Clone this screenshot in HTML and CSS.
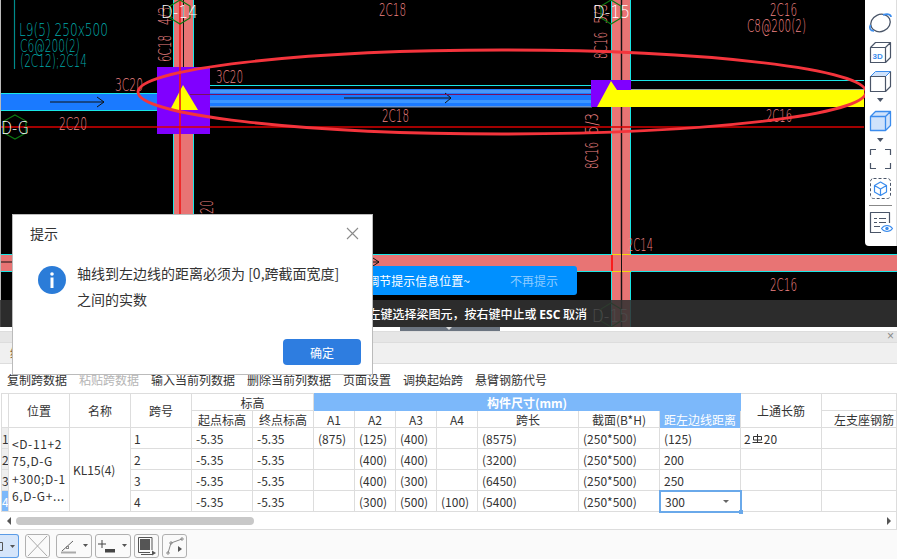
FILE: index.html
```html
<!DOCTYPE html>
<html lang="zh-CN">
<head>
<meta charset="utf-8">
<title>梁平法表格</title>
<link rel="stylesheet" href="styles.css">
</head>
<body>
<div class="app">
  <section class="canvas">
    <svg class="drawing" width="897" height="327" viewBox="0 0 897 327">
      <rect width="897" height="327" fill="#000"/>
      <rect width="1" height="327" fill="#bbb"/>
      <!-- columns -->
      <rect x="173" y="0" width="21" height="327" fill="#e87474"/>
      <path d="M173.500 0V327M193.500 0V327" class="cy"/>
      <rect x="611" y="0" width="20" height="327" fill="#e87474"/>
      <path d="M611.500 0V327M630.500 0V327" class="cy"/>
      <path d="M621.500 0V327" stroke="#111" stroke-width="1.400"/>
      <!-- lower beam -->
      <rect x="1" y="254" width="896" height="18" fill="#e87474"/>
      <path d="M1 254.500H897M1 271.500H897" class="cy"/>
      <path d="M612 254.500H631M612 271.500H631" stroke="#f5d90a"/>
      <path d="M612 255V271" stroke="#f00" stroke-width="1.500"/>
      <path d="M621.500 254V272" stroke="#111"/>
      <path d="M1 262H12M360 262H379M373 258L379 262L373 266" stroke="#111" fill="none"/>
      <!-- upper beams -->
      <rect x="1" y="93" width="156" height="18" fill="#1a7aff"/>
      <path d="M1 93.500H157M1 110.500H157" class="cy"/>
      <path d="M50 102H104M97 97L104 102L97 107" stroke="#111" fill="none"/>
      <path d="M210 85.500H592" class="cy"/>
      <rect x="210" y="89" width="382" height="18" fill="#1a7aff"/>
      <rect x="210" y="90" width="382" height="3" fill="#4a98f8"/>
      <rect x="210" y="100" width="382" height="3" fill="#3c96ff"/>
      <rect x="210" y="106" width="382" height="1.500" fill="#6a92c8"/>
      <path d="M344 98H451M445 93L451 98L445 103" stroke="#111" fill="none"/>
      <!-- nodes -->
      <rect x="157" y="67" width="53" height="67" fill="#8000ff"/>
      <path d="M190 94.500H592" stroke="#7a1060"/>
      <polygon points="183,85 170,110 198,110" fill="#ff0"/>
      <rect x="591" y="80" width="40" height="27" fill="#8000ff"/>
      <path d="M631 80.500H864" class="cy"/>
      <path d="M631 89.500H864" stroke="#9a9" />
      <polygon points="611,81 617,90 864,90 864,107 597,107" fill="#ff0"/>
      <path d="M180 0V214" stroke="#f01818" stroke-width="1.600"/>
      <path d="M183.500 0V67" stroke="#111"/>
      <path d="M1 127H864" stroke="#d80000" stroke-width="1.500"/>
      <!-- annotations -->
      <path d="M14.500 0V69" stroke="#008b8b" stroke-width="1.200"/>
      <text class="t teal" x="19" y="36" textLength="89" lengthAdjust="spacingAndGlyphs">L9(5) 250x500</text>
      <text class="t teal" x="20" y="52" textLength="60" lengthAdjust="spacingAndGlyphs">C6@200(2)</text>
      <text class="t teal" x="20" y="67" textLength="67" lengthAdjust="spacingAndGlyphs">(2C12);2C14</text>
      <text class="t" x="379" y="16" textLength="27" lengthAdjust="spacingAndGlyphs">2C18</text>
      <text class="t" x="115" y="91" textLength="28" lengthAdjust="spacingAndGlyphs">3C20</text>
      <text class="t" x="216" y="83" textLength="27" lengthAdjust="spacingAndGlyphs">3C20</text>
      <text class="t" x="382" y="122" textLength="27" lengthAdjust="spacingAndGlyphs">2C18</text>
      <text class="t" x="59" y="130" textLength="28" lengthAdjust="spacingAndGlyphs">2C20</text>
      <text class="t" x="770" y="16" textLength="27" lengthAdjust="spacingAndGlyphs">2C16</text>
      <text class="t" x="747" y="32" textLength="59" lengthAdjust="spacingAndGlyphs">C8@200(2)</text>
      <text class="t" x="766" y="122" textLength="26" lengthAdjust="spacingAndGlyphs">2C16</text>
      <text class="t" x="627" y="251" textLength="26" lengthAdjust="spacingAndGlyphs">2C14</text>
      <text class="t" x="770" y="291" textLength="27" lengthAdjust="spacingAndGlyphs">2C16</text>
      <text class="t" transform="translate(171 62) rotate(-90)" textLength="27" lengthAdjust="spacingAndGlyphs">6C18</text>
      <text class="t" transform="translate(171 25) rotate(-90) scale(.66 1)">4/3</text>
      <text class="t" transform="translate(213 214) rotate(-90)" textLength="14" lengthAdjust="spacingAndGlyphs">20</text>
      <text class="t" transform="translate(607 59) rotate(-90)" textLength="27" lengthAdjust="spacingAndGlyphs">8C16</text>
      <text class="t" transform="translate(607 24) rotate(-90) scale(.75 1)">5/3</text>
      <text class="t" transform="translate(598 134) rotate(-90)" textLength="21" lengthAdjust="spacingAndGlyphs">5/3</text>
      <text class="t" transform="translate(598 169) rotate(-90)" textLength="27" lengthAdjust="spacingAndGlyphs">8C16</text>
      <!-- ellipse -->
      <ellipse cx="502" cy="92" rx="364" ry="42" fill="none" stroke="#f4343c" stroke-width="2.800"/>
      <!-- axis marks -->
      <polygon points="180,0 190,6 190,18 180,24 170,18 170,6" class="hex"/>
      <polygon points="611,0 621,6 621,18 611,24 601,18 601,6" class="hex"/>
      <polygon points="15,115 26,121 26,133 15,139 4,133 4,121" class="hex"/>
      <polygon points="611,303 621,309 621,321 611,327 601,321 601,309" class="hex"/>
      <text class="t axis" x="161" y="18" textLength="37" lengthAdjust="spacingAndGlyphs">D-14</text>
      <text class="t axis" x="593" y="18" textLength="37" lengthAdjust="spacingAndGlyphs">D-15</text>
      <text class="t axis" x="1" y="134" textLength="28" lengthAdjust="spacingAndGlyphs">D-G</text>
      <text class="t axis" x="592" y="322" textLength="37" lengthAdjust="spacingAndGlyphs">D-15</text>
    </svg>

    <aside class="viewbar">
      <svg width="32" height="246" viewBox="0 0 32 246" fill="none" stroke-linejoin="round">
        <ellipse cx="15.500" cy="23" rx="10" ry="8.500" transform="rotate(-25 15.500 23)" stroke="#4a5568" stroke-width="1.300"/>
        <path d="M18 15C22 13.500 26 14 26 17" stroke="#3b8ced" stroke-width="1.700"/>
        <path d="M5.500 25C4 28 5 31 9 31" stroke="#3b8ced" stroke-width="1.700"/>
        <path d="M5.500 47.500H20.500V62.500H5.500ZM5.500 47.500L10.500 42.500H25.500V57.500L20.500 62.500M20.500 47.500L25.500 42.500" stroke="#4a5568" stroke-width="1.200"/>
        <text class="vb3d" x="7.500" y="59">3D</text>
        <polygon points="5.500,76.500 10.500,71.500 25.500,71.500 20.500,76.500" fill="#cfe2fb" stroke="#3b8ced"/>
        <path d="M5.500 76.500H20.500V91.500H5.500ZM20.500 76.500V91.500L25.500 86.500V71.500" stroke="#4a5568" stroke-width="1.200"/>
        <polygon points="12,98 18.500,98 15.250,102" fill="#4a5568"/>
        <path d="M5.500 116.500H20.500V130.500H5.500ZM5.500 116.500L10.500 111.500H25.500V125.500L20.500 130.500M20.500 116.500L25.500 111.500" stroke="#3b8ced" stroke-width="1.300" fill="#cfe2fb"/>
        <polygon points="12,138 18.500,138 15.250,142" fill="#4a5568"/>
        <path d="M5.500 155V149.500H11M20 149.500H25.500V155M25.500 163V168.500H20M11 168.500H5.500V163" stroke="#4a5568" stroke-width="1.200"/>
        <rect x="5.500" y="178.500" width="20" height="20" rx="3" stroke="#4a5568" stroke-dasharray="3 2"/>
        <path d="M15.500 182L21.500 185.500V192L15.500 195.500L9.500 192V185.500ZM9.500 185.500L15.500 189L21.500 185.500M15.500 189V195.500" stroke="#3b8ced" stroke-width="1.200"/>
        <path d="M4 205.500H27" stroke="#888"/>
        <path d="M16 232.500H5.500V212.500H24.500V223" stroke="#4a5568" stroke-width="1.200"/>
        <path d="M9 218.500H12M14 218.500H21M9 222.500H12M14 222.500H21M9 226.500H15" stroke="#4a5568"/>
        <path d="M16.500 228.500C19.500 224.500 24.500 224.500 27.500 228.500C24.500 232.500 19.500 232.500 16.500 228.500Z" stroke="#3b8ced" stroke-width="1.200" fill="#fff"/>
        <circle cx="22" cy="228.500" r="1.700" fill="#3b8ced"/>
      </svg>
    </aside>

    <div class="tip">
      <span>拖动可调节提示信息位置~</span>
      <span class="tip-dismiss">不再提示</span>
    </div>
    <div class="status">按鼠标左键选择梁图元，按右键中止或 <b>ESC</b> 取消</div>
  </section>

  <div class="gutter"><span class="handle"></span></div>

  <section class="panel">
    <div class="panel-title"><span class="panel-close">×</span></div>
    <div class="panel-tabs">绘制</div>
    <nav class="ribbon">
      <span>复制跨数据</span>
      <span class="off">粘贴跨数据</span>
      <span>输入当前列数据</span>
      <span>删除当前列数据</span>
      <span>页面设置</span>
      <span>调换起始跨</span>
      <span>悬臂钢筋代号</span>
    </nav>
    <div class="grid">
      <table>
        <colgroup>
          <col class="c-idx"><col class="c-m"><col class="c-m"><col class="c-m"><col class="c-m"><col class="c-m">
          <col class="c-a"><col class="c-a"><col class="c-a"><col class="c-a">
          <col class="c-l"><col class="c-s"><col class="c-s"><col class="c-s"><col class="c-e">
        </colgroup>
        <thead>
          <tr class="hr">
            <th rowspan="2"></th><th rowspan="2">位置</th><th rowspan="2">名称</th><th rowspan="2">跨号</th>
            <th colspan="2">标高</th>
            <th colspan="7" class="hl strong">构件尺寸(mm)</th>
            <th rowspan="2">上通长筋</th><th></th>
          </tr>
          <tr class="hr">
            <th>起点标高</th><th>终点标高</th>
            <th>A1</th><th>A2</th><th>A3</th><th>A4</th><th>跨长</th><th>截面(B*H)</th>
            <th class="hl">距左边线距离</th>
            <th class="clip">左支座钢筋</th>
          </tr>
        </thead>
        <tbody>
          <tr>
            <td class="idx">1</td>
            <td rowspan="4" class="pos">&lt;D-11+2<br>75,D-G<br>+300;D-1<br>6,D-G+...</td>
            <td rowspan="4" class="name">KL15(4)</td>
            <td class="n">1</td><td>-5.35</td><td>-5.35</td>
            <td>(875)</td><td>(125)</td><td>(400)</td><td></td><td>(8575)</td><td>(250*500)</td><td>(125)</td>
            <td class="bar">2<svg class="rebar" width="11" height="10" viewBox="0 0 11 10" fill="none" stroke="#333"><path d="M1.500 2.500H9.500V6H1.500ZM5.500 0V8.500M0.500 8.500H10.500"/></svg>20</td><td></td>
          </tr>
          <tr>
            <td class="idx">2</td>
            <td class="n">2</td><td>-5.35</td><td>-5.35</td>
            <td></td><td>(400)</td><td>(400)</td><td></td><td>(3200)</td><td>(250*500)</td><td>200</td><td></td><td></td>
          </tr>
          <tr>
            <td class="idx">3</td>
            <td class="n">3</td><td>-5.35</td><td>-5.35</td>
            <td></td><td>(400)</td><td>(300)</td><td></td><td>(6450)</td><td>(250*500)</td><td>250</td><td></td><td></td>
          </tr>
          <tr>
            <td class="idx cur">4</td>
            <td class="n">4</td><td>-5.35</td><td>-5.35</td>
            <td></td><td>(300)</td><td>(500)</td><td>(100)</td><td>(5400)</td><td>(250*500)</td>
            <td class="sel">300<i class="caret"></i></td><td></td><td></td>
          </tr>
        </tbody>
      </table>
      <div class="hscroll">
        <i class="arrow-l"></i>
        <div class="track"><div class="thumb"></div></div>
        <i class="arrow-r"></i>
      </div>
    </div>
    <div class="tools">
      <button class="tool on" type="button">
        <svg width="18" height="22" viewBox="0 0 18 22" fill="none"><path d="M0 7.500H2.500V15.500H0" stroke="#555"/><polygon points="10,10 15,10 12.500,13" fill="#555"/></svg>
      </button>
      <button class="tool gap" type="button">
        <svg width="23" height="22" viewBox="0 0 23 22" fill="none" stroke="#aaa"><path d="M2 1L21 21M21 1L2 21"/></svg>
      </button>
      <button class="tool" type="button">
        <svg width="34" height="22" viewBox="0 0 34 22" fill="none" stroke="#666"><path d="M5 16L16 6"/><path d="M4 17.500H19" stroke="#aaa" stroke-width="2"/><rect x="9.500" y="11.500" width="2" height="2" stroke="#888"/><polygon points="26,9 31,9 28.500,12" fill="#555" stroke="none"/></svg>
      </button>
      <button class="tool" type="button">
        <svg width="34" height="22" viewBox="0 0 34 22" fill="none" stroke="#444"><path d="M6 5V13M2 9H10"/><rect x="9" y="14" width="10" height="3.500" fill="#444" stroke="none"/><polygon points="26,9 31,9 28.500,12" fill="#555" stroke="none"/></svg>
      </button>
      <button class="tool" type="button">
        <svg width="22" height="22" viewBox="0 0 22 22" fill="none" stroke="#555"><rect x="4" y="4" width="10" height="11" fill="#555" stroke="none"/><path d="M2.500 2.500H16V15M2.500 2.500V17.500H14M5 19.500H16"/><polygon points="16,15.500 20,18 16,20.500" fill="#555" stroke="none"/></svg>
      </button>
      <button class="tool" type="button">
        <svg width="22" height="22" viewBox="0 0 22 22" fill="none" stroke="#888"><path d="M4 18L7 8L18 4"/><circle cx="4" cy="18" r="1.200"/><circle cx="7" cy="8" r="1.200"/><circle cx="18" cy="4" r="1.200"/><polygon points="14,11 18,14 14,17" fill="#555" stroke="none"/></svg>
      </button>
    </div>
  </section>

  <div class="dialog" role="dialog">
    <header class="dialog-head">
      <span>提示</span>
      <svg width="13" height="13" viewBox="0 0 13 13" fill="none" stroke="#8a8a8a" stroke-width="1.100"><path d="M1 1L12 12M12 1L1 12"/></svg>
    </header>
    <div class="dialog-body">
      <svg class="info" width="28" height="28" viewBox="0 0 28 28"><circle cx="14" cy="14" r="14" fill="#2b7cd8"/><circle cx="14" cy="8" r="1.800" fill="#fff"/><rect x="12.500" y="11.500" width="3" height="10.500" fill="#fff"/></svg>
      <p>轴线到左边线的距离必须为 [0,跨截面宽度]<br>之间的实数</p>
    </div>
    <button class="ok" type="button">确定</button>
  </div>
</div>
</body>
</html>
```

FILE: styles.css
```css
* { box-sizing: border-box; }
html, body { margin: 0; padding: 0; height: 100%; overflow: hidden; background: #fff; }
body {
  font-family: "Noto Sans CJK SC", "Noto Sans", sans-serif;
  font-size: 12px;
  color: #333;
}
.app { position: relative; width: 897px; height: 559px; overflow: hidden; display: flex; flex-direction: column; }

/* drawing */
.canvas { position: relative; height: 327px; flex: none; overflow: hidden; background: #000; }
.drawing { display: block; }
.cy { stroke: #19e6e6; fill: none; }
.hex { fill: none; stroke: #0c7a12; stroke-width: 1.200; }
.t {
  font-family: "DejaVu Sans", "Liberation Sans", sans-serif;
  font-weight: 200;
  font-size: 17px;
  fill: #f08484;
}
.teal { fill: #00a8a8; }
.axis { fill: #fff; font-size: 17px; }

.viewbar {
  position: absolute; left: 865px; top: 0; width: 32px; height: 246px;
  background: #fff; border-radius: 0 0 0 4px; border-right: 1px solid #ddd;
}
.viewbar svg { display: block; }
.vb3d { font: 700 8px "Liberation Sans", sans-serif; fill: #3b8ced; }

.tip {
  position: absolute; left: 280px; top: 266px; width: 297px; height: 29px;
  display: flex; align-items: center; justify-content: flex-end; gap: 40px;
  padding-right: 19px;
  background: #0090ff; color: #fff; border-radius: 3px; white-space: nowrap;
}
.tip-dismiss { color: #8ccbff; }

.status {
  position: absolute; left: 0; top: 300px; width: 100%; height: 27px;
  padding-right: 310px; text-align: right; line-height: 27px;
  background: rgba(50, 50, 50, .88); color: #fff; white-space: nowrap;
  font-weight: 500;
}
.status b { font-family: "Open Sans", sans-serif; font-weight: 700; }

.gutter { position: relative; height: 4px; flex: none; background: #fff; }
.handle { display: block; width: 100px; height: 4px; margin-left: 400px; background: #6b7480; position: relative; }
.handle::after {
  content: ""; position: absolute; left: 46px; top: 0;
  border: 3px solid transparent; border-top: 3px solid #ddd;
}

/* panel */
.panel { flex: 1; display: flex; flex-direction: column; background: #fafafa; }
.panel-title {
  height: 11px; flex: none; background: #e6e6e6; border-top: 1px solid #ddd;
  display: flex; justify-content: flex-end; padding-right: 3px;
}
.panel-close { font: 12px/9px "Liberation Sans", sans-serif; color: #888; }
.panel-tabs {
  height: 22px; flex: none; background: #f0f0f0;
  border-top: 1px solid #ddd; border-bottom: 1px solid #ddd;
  padding-left: 10px; line-height: 20px; color: #8a6a3a; overflow: hidden;
}
.ribbon {
  height: 29px; flex: none; background: #fff; display: flex; gap: 12px;
  padding: 8px 0 0 7px; line-height: 16px; white-space: nowrap;
}
.off { color: #b5b5b5; }

.grid { background: #fff; height: 137px; flex: none; padding-left: 1px; border-bottom: 1px solid #ddd; border-right: 1px solid #ddd; }
table { border-collapse: collapse; table-layout: fixed; width: 895px; }
.c-idx { width: 7px; }
.c-m { width: 61px; }
.c-a { width: 41px; }
.c-l { width: 101px; }
.c-s { width: 81px; }
.c-e { width: 75px; }
th, td {
  border: 1px solid #ddd; padding: 0 4px; font-size: 12px; line-height: 15px;
  font-weight: 400; text-align: left; white-space: nowrap; overflow: hidden; color: #333;
}
tr.hr { height: 17px; }
tbody tr { height: 21px; }
th { text-align: center; }
.hl { background: #7cb8fa; color: #fff; border-color: #7cb8fa; }
.strong { font-weight: 700; }
.clip { padding: 0 0 0 12px; text-align: left; }
td.idx { padding: 0; background: #eee; text-align: center; font-size: 12px; }
td.cur { background: #7cb8fa; color: #fff; }
td.pos { padding: 0 0 0 3px; white-space: nowrap; line-height: 17.300px; letter-spacing: .6px; }
td.name { padding: 0 0 0 3px; }
td.n { padding-left: 3px; }
td.bar { padding-left: 3px; }
.rebar { margin: 0 1px; vertical-align: 0; }
td.sel {
  position: relative; padding-left: 5px; overflow: visible;
  outline: 2px solid #6aa9ea; outline-offset: -1px;
}
td.sel::after {
  content: ""; position: absolute; right: -3px; bottom: -3px;
  width: 4px; height: 4px; background: #6aa9ea;
}
.caret {
  position: absolute; right: 11px; top: 9px;
  border: 3px solid transparent; border-top: 3px solid #666;
}

.hscroll { height: 18px; display: flex; align-items: center; padding: 0 5px 0 6px; }
.arrow-l { border: 4px solid transparent; border-right: 4px solid #555; border-left: 0; margin-right: 5px; }
.arrow-r { border: 4px solid transparent; border-left: 4px solid #555; border-right: 0; margin-left: 4px; }
.track { flex: 1; height: 8px; }
.thumb { width: 238px; height: 8px; background: #c8c8c8; border-radius: 4px; }

.tools { display: flex; gap: 3px; padding-top: 4px; height: 29px; flex: none; }
.tool {
  display: flex; align-items: center; justify-content: center;
  padding: 0; height: 24px; border: 1px solid #b0b0b0; border-radius: 3px; background: #fafafa;
}
.tool.on { width: 19px; border: 1px solid #5a9be6; border-left: 0; background: #d5e5fa; border-radius: 0 3px 3px 0; margin-right: 3px; }
.tool.gap { width: 25px; margin-right: 3px; }
.tool:nth-child(3), .tool:nth-child(4) { width: 36px; }
.tool:nth-child(5), .tool:nth-child(6) { width: 25px; }

/* dialog */
.dialog {
  position: absolute; left: 12px; top: 214px; width: 361px; height: 161px;
  background: #fff; border: 1px solid #bbb;
  display: flex; flex-direction: column;
}
.dialog-head {
  height: 36px; flex: none; display: flex; align-items: center; justify-content: space-between;
  padding: 0 13px 0 17px; font-size: 14px; color: #333;
}
.dialog-body { display: flex; gap: 11px; padding: 9px 0 0 25px; }
.info { flex: none; margin-top: 6px; }
.dialog-body p { margin: 0; font-size: 14px; line-height: 26px; color: #333; white-space: nowrap; }
.ok {
  margin: auto 11px 9px auto; width: 78px; height: 26px; padding: 0;
  border: 0; border-radius: 4px; background: #2e7de0; color: #fff;
  font: 12px "Noto Sans CJK SC", sans-serif;
}
```
